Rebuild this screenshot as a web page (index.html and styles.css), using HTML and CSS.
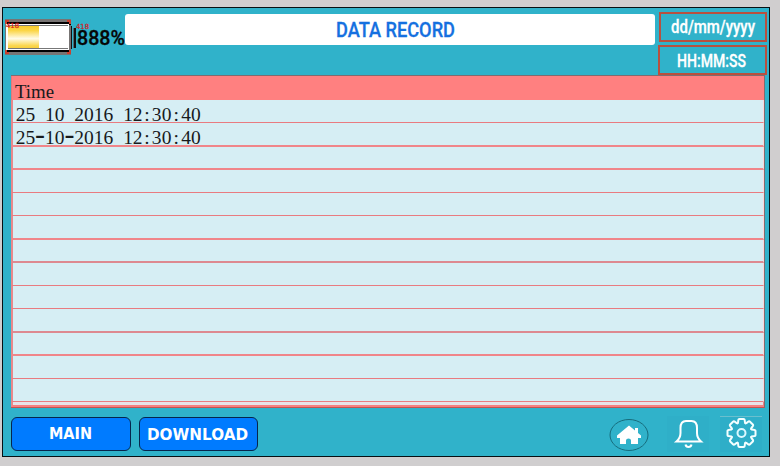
FILE: index.html
```html
<!DOCTYPE html>
<html lang="en">
<head>
<meta charset="utf-8">
<title>Data Record</title>
<link rel="stylesheet" href="styles.css">
</head>
<body>
<main class="panel">
  <header class="top">
    <svg class="battery" width="122" height="37" viewBox="0 0 122 37">
      <defs>
        <linearGradient id="charge" x1="0" y1="0" x2="0" y2="1">
          <stop offset="0" stop-color="#f9cc2a"/><stop offset=".2" stop-color="#fbd648"/><stop offset=".55" stop-color="#fffbe8"/><stop offset=".85" stop-color="#fbd750"/><stop offset="1" stop-color="#f8cc35"/>
        </linearGradient>
      </defs>
      <rect x="2" y="1" width="66" height="36" fill="#777473"/>
      <rect x="3" y="4" width="65" height="3" fill="#000"/>
      <rect x="3" y="32" width="65" height="2" fill="#000"/>
      <rect x="3" y="6" width="63" height="26" fill="#fff"/>
      <rect x="68" y="8" width="1" height="23" fill="#111"/>
      <rect x="5" y="8" width="31" height="23" fill="url(#charge)"/>
      <path d="M5 7.500H65M5 30.500H65" stroke="#777"/>
      <path d="M3 6V3H6M64 3H67V6M3 32V35H6M64 35H67V32" fill="none" stroke="#c9402f" stroke-width="2"/>
      <rect x="70" y="10" width="1" height="20" fill="#4d6b72"/>
      <rect x="71" y="10" width="2" height="20" fill="#111"/>
      <text class="percent" x="74" y="27" textLength="48" lengthAdjust="spacingAndGlyphs">888%</text>
      <text class="tag" x="3" y="10" textLength="13" lengthAdjust="spacingAndGlyphs">418</text>
      <text class="tag" x="73" y="11" textLength="13" lengthAdjust="spacingAndGlyphs">418</text>
    </svg>
    <h1 class="title">
      <svg width="530" height="31"><text x="211" y="23" textLength="119" lengthAdjust="spacingAndGlyphs">DATA RECORD</text></svg>
    </h1>
    <div class="clock">
      <div class="stamp date"><svg width="104" height="26"><text x="10" y="19" textLength="84" lengthAdjust="spacingAndGlyphs">dd/mm/yyyy</text></svg></div>
      <div class="stamp time"><svg width="105" height="26"><text x="17" y="20" textLength="69" lengthAdjust="spacingAndGlyphs">HH:MM:SS</text></svg></div>
    </div>
  </header>

  <section class="table">
    <div class="head"><svg width="200" height="24"><text class="label" x="3" y="22" textLength="39" lengthAdjust="spacingAndGlyphs">Time</text></svg></div>
    <div class="row"><svg width="200" height="22"><text x="7.500 17.300 27 36.800 46.600 56.400 66.200 75.800 85.500 95.300 105 115 124.700 134 143.700 153.500 163.200 173 182.800" y="21">25 10 2016 12:30:40</text></svg></div>
    <div class="row tall thick"><svg width="200" height="22"><text x="7.500 17.300 27 36.800 46.600 56.400 66.200 75.800 85.500 95.300 105 115 124.700 134 143.700 153.500 163.200 173 182.800" y="21">25<tspan class="dash">-</tspan>10<tspan class="dash">-</tspan>2016 12:30:40</text></svg></div>
    <div class="row thick"></div>
    <div class="row"></div>
    <div class="row"></div>
    <div class="row tall thick"></div>
    <div class="row thick dim"></div>
    <div class="row"></div>
    <div class="row"></div>
    <div class="row tall thick dim"></div>
    <div class="row thick"></div>
    <div class="row"></div>
    <div class="row"></div>
    <div class="foot"></div>
  </section>

  <footer class="bottom">
    <button class="btn main"><svg width="118" height="32"><text x="37" y="20.500" textLength="43" lengthAdjust="spacingAndGlyphs">MAIN</text></svg></button>
    <button class="btn download"><svg width="117" height="32"><text x="7" y="21.500" textLength="101" lengthAdjust="spacingAndGlyphs">DOWNLOAD</text></svg></button>
    <nav class="icons">
      <svg width="42" height="36" viewBox="0 0 42 36">
        <ellipse cx="21" cy="19" rx="19" ry="15.500" fill="none" stroke="#176c7c"/>
        <path d="M21 9.500L9 19.500V22H12V28H18V24.500Q18 22.500 20.500 22.500Q23 22.500 23 24.500V28H30V22H33V19.500L30 17V12H27V14.500Z" fill="#fff"/>
      </svg>
      <svg class="bell" width="42" height="36" viewBox="0 0 42 36">
        <rect width="42" height="36" fill="#2fafc8"/>
        <path d="M9.500 25.500Q13.500 22 13.500 17V12Q13.500 5 19 5H24.500Q30 5 30 12V17Q30 22 34 25.500Z" fill="none" stroke="#fff" stroke-width="2"/>
        <path d="M18.500 28.500Q19 31 21.500 31Q24 31 24.500 28.500" fill="none" stroke="#fff" stroke-width="2"/>
      </svg>
      <svg class="gear" width="42" height="36" viewBox="0 0 42 36">
        <defs><path id="tooth" d="M9.700 -4C10.400 -2.600 14 -4.200 14 -2V2C14 4.200 10.400 2.600 9.700 4"/></defs>
        <rect width="42" height="36" fill="#2eaec8"/>
        <path d="M0 .5H42" stroke="#6abfce"/>
        <g transform="translate(21.500 17)" fill="none" stroke="#f4ffff" stroke-width="2" stroke-linecap="round">
          <use href="#tooth"/><use href="#tooth" transform="rotate(45)"/><use href="#tooth" transform="rotate(90)"/><use href="#tooth" transform="rotate(135)"/><use href="#tooth" transform="rotate(180)"/><use href="#tooth" transform="rotate(225)"/><use href="#tooth" transform="rotate(270)"/><use href="#tooth" transform="rotate(315)"/>
          <circle r="4" stroke="#dcf9ff"/>
        </g>
      </svg>
    </nav>
  </footer>
</main>
</body>
</html>
```
FILE: styles.css
```css
* { box-sizing: border-box; }
body { margin: 0; height: 466px; overflow: hidden; background: #d0cecf; font-family: Roboto, "Liberation Sans", sans-serif; }
svg { display: block; flex: none; overflow: visible; }
.panel { width: 768px; height: 450px; margin: 7px 0 0 2px; border: 1px solid #061014; background: #30b2ca; }
.top { display: flex; height: 67px; }
.battery { margin-top: 10px; }
.percent { font: 500 20.5px Roboto, sans-serif; fill: #060606; stroke: #060606; stroke-width: .3px; }
.tag { font: 7px "DejaVu Sans", sans-serif; fill: #d8181c; stroke: #d8181c; stroke-width: .2px; }
.title { width: 530px; height: 31px; margin: 6px 0 0; border-radius: 3px; background: #fff; }
.title text { font: 500 21px Roboto, sans-serif; fill: #1470e0; stroke: #1470e0; stroke-width: .3px; }
.clock { width: 109px; margin: 4px 0 0 3px; display: flex; flex-direction: column; align-items: flex-end; gap: 3px; }
.stamp { width: 108px; height: 30px; border: 2px solid #b8503f; }
.stamp.time { width: 109px; }
.stamp text { font: 500 17.5px Roboto, sans-serif; fill: #fff; stroke: #fff; stroke-width: .3px; }
.table { width: 754px; height: 333px; margin-left: 8px; border: solid #7f6c70; border-width: 1px 1px 1px 0; border-bottom-color: #c45250; background: #d6eef4; }
.head { height: 24px; background: #ff8080; border-left: 1px solid #e27a7c; }
.table text { font: 19.5px "Liberation Serif", serif; fill: #171a1c; text-anchor: middle; }
.table .label { text-anchor: start; }
.dash { font-size: 30px; }
.row { height: 23px; border-left: 2px solid #e8898c; border-right: 1px solid #f8d8dc; border-bottom: 1px solid #e97b80; }
.row.tall { height: 24px; }
.row.thick { border-bottom: 2px solid #f08589; }
.row.dim { border-bottom-color: #dd8990; }
.foot { height: 5px; border-left: 2px solid #e8898c; border-right: 1px solid #ef8085; border-bottom: 2px solid #f67f80; background: #e8e2e8; }
.bottom { display: flex; margin: 9px 0 0 8px; }
.btn { padding: 0; height: 34px; border: 1px solid #06264d; border-radius: 6px; background: #007bff; }
.btn.main { width: 120px; }
.btn.download { width: 119px; margin-left: 8px; }
.btn text { font: bold 15px "DejaVu Sans", sans-serif; fill: #fff; }
.icons { display: flex; margin: -1px 0 0 350px; }
.bell { margin-left: 17px; }
.gear { margin-left: 11px; }
```
